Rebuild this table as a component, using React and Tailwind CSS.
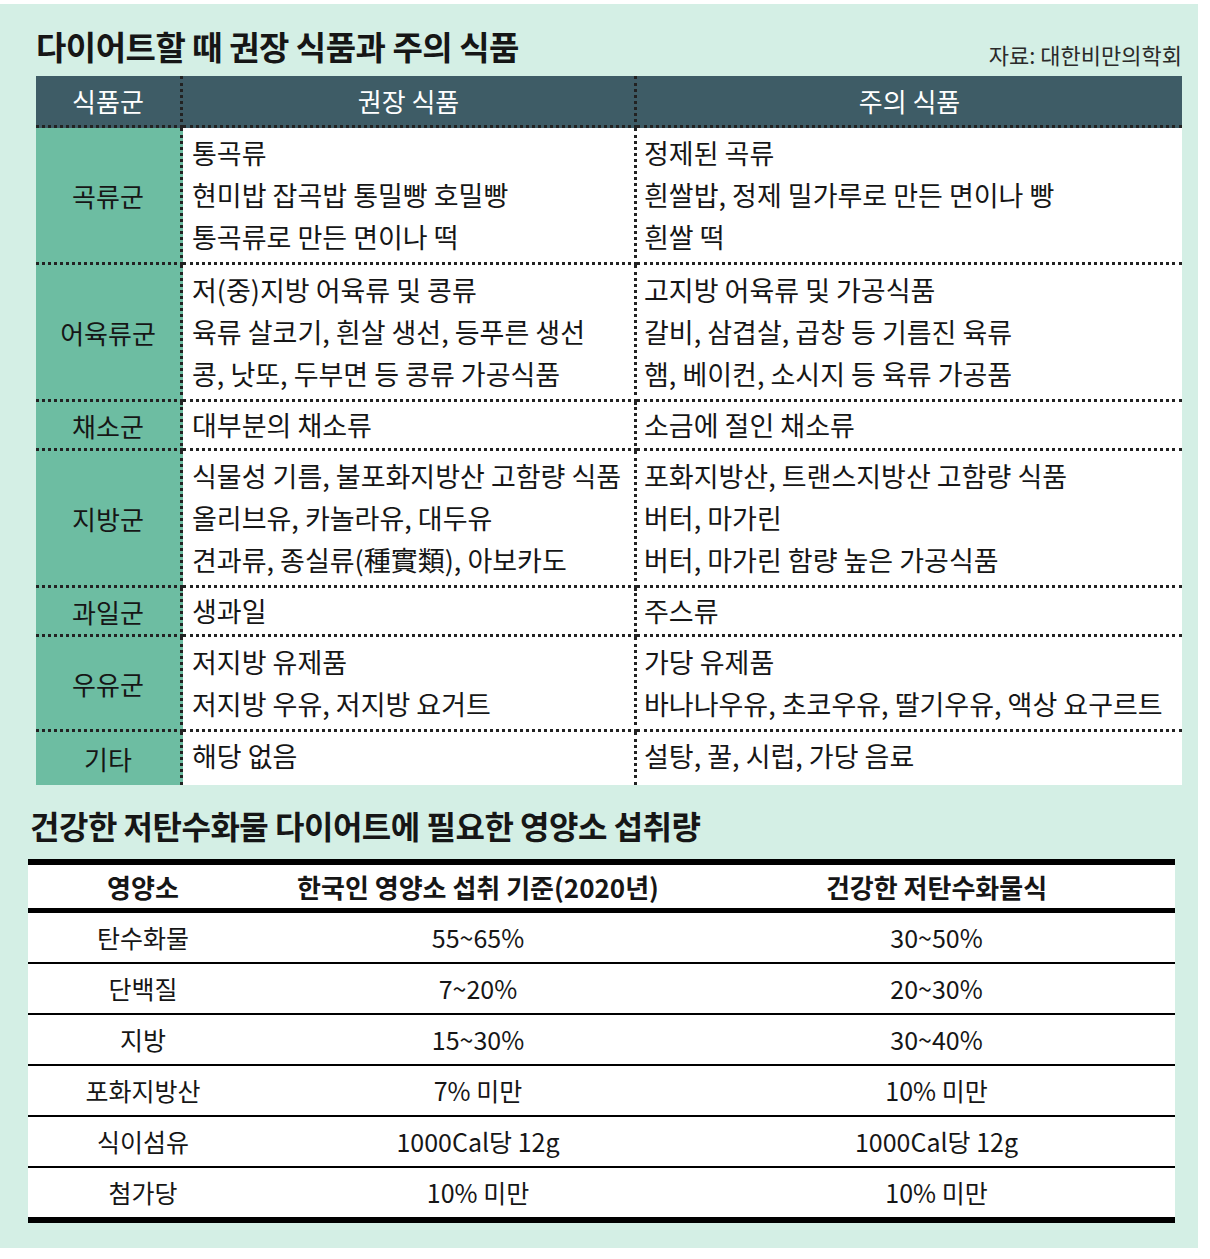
const foods = [
  {
    group: '곡류군',
    good: ['통곡류', '현미밥 잡곡밥 통밀빵 호밀빵', '통곡류로 만든 면이나 떡'],
    bad: ['정제된 곡류', '흰쌀밥, 정제 밀가루로 만든 면이나 빵', '흰쌀 떡'],
  },
  {
    group: '어육류군',
    good: ['저(중)지방 어육류 및 콩류', '육류 살코기, 흰살 생선, 등푸른 생선', '콩, 낫또, 두부면 등 콩류 가공식품'],
    bad: ['고지방 어육류 및 가공식품', '갈비, 삼겹살, 곱창 등 기름진 육류', '햄, 베이컨, 소시지 등 육류 가공품'],
  },
  { group: '채소군', good: ['대부분의 채소류'], bad: ['소금에 절인 채소류'] },
  {
    group: '지방군',
    good: ['식물성 기름, 불포화지방산 고함량 식품', '올리브유, 카놀라유, 대두유', '견과류, 종실류(種實類), 아보카도'],
    bad: ['포화지방산, 트랜스지방산 고함량 식품', '버터, 마가린', '버터, 마가린 함량 높은 가공식품'],
  },
  { group: '과일군', good: ['생과일'], bad: ['주스류'] },
  {
    group: '우유군',
    good: ['저지방 유제품', '저지방 우유, 저지방 요거트'],
    bad: ['가당 유제품', '바나나우유, 초코우유, 딸기우유, 액상 요구르트'],
  },
  { group: '기타', good: ['해당 없음'], bad: ['설탕, 꿀, 시럽, 가당 음료'], tall: true },
];

const nutrients = [
  ['탄수화물', '55~65%', '30~50%'],
  ['단백질', '7~20%', '20~30%'],
  ['지방', '15~30%', '30~40%'],
  ['포화지방산', '7% 미만', '10% 미만'],
  ['식이섬유', '1000Cal당 12g', '1000Cal당 12g'],
  ['첨가당', '10% 미만', '10% 미만'],
];

function Lines({ items, pad }) {
  return (
    <div className={pad}>
      {items.map((t) => (
        <div key={t} className="leading-[42px] whitespace-nowrap">{t}</div>
      ))}
    </div>
  );
}

export default function App() {
  return (
    <div className="w-[1210px] h-[1259px] bg-white font-['Noto_Sans_CJK_KR','Noto_Sans',sans-serif] text-[#161616]">
      <div className="w-[1198px] h-[1244px] mt-[4px] bg-[#d4efe5] pt-[20px]">
        {/* 권장 / 주의 식품 */}
        <div className="ml-[36px] w-[1146px]">
          <div className="flex items-end justify-between">
            <h1 className="text-[33px] font-bold leading-[44px] tracking-[-0.5px]">다이어트할 때 권장 식품과 주의 식품</h1>
            <span className="text-[22px] leading-[28px] text-[#2a2a2a]">자료: 대한비만의학회</span>
          </div>

          <div className="mt-[8px] grid grid-cols-[147px_454px_545px] text-[27px]">
            <div className="h-[52px] bg-[#3e5c66] text-white text-[26px] flex items-center justify-center border-r-[3px] border-b-[3px] border-dotted border-[#222]">식품군</div>
            <div className="h-[52px] bg-[#3e5c66] text-white text-[26px] flex items-center justify-center border-r-[3px] border-b-[3px] border-dotted border-[#222]">권장 식품</div>
            <div className="h-[52px] bg-[#3e5c66] text-white text-[26px] flex items-center justify-center border-b-[3px] border-dotted border-[#222]">주의 식품</div>

            {foods.map((row, i) => {
              const last = i === foods.length - 1;
              const pad = row.tall ? 'pt-[3px] pb-[8px]' : row.good.length === 1 ? 'py-[2px]' : 'py-[4px]';
              const bottom = last ? '' : 'border-b-[3px]';
              return [
                <div key={row.group + 'g'} className={`bg-[#6dbda2] text-[26px] flex items-center justify-center border-r-[3px] border-dotted border-[#222] ${bottom}`}>
                  {row.group}
                </div>,
                <div key={row.group + 'a'} className={`bg-white pl-[9px] border-r-[3px] border-dotted border-[#222] ${bottom}`}>
                  <Lines items={row.good} pad={pad} />
                </div>,
                <div key={row.group + 'b'} className={`bg-white pl-[7px] border-dotted border-[#222] ${bottom}`}>
                  <Lines items={row.bad} pad={pad} />
                </div>,
              ];
            })}
          </div>
        </div>

        {/* 영양소 섭취량 */}
        <div className="ml-[28px] w-[1147px] mt-[18px]">
          <h2 className="ml-[2px] text-[32px] font-bold leading-[44px] tracking-[-0.5px]">건강한 저탄수화물 다이어트에 필요한 영양소 섭취량</h2>

          <div className="mt-[12px] bg-white border-t-[6px] border-black text-[25px]">
            <div className="grid grid-cols-[230px_440px_477px] h-[48px] items-center text-center text-[26px] font-bold border-b-[5px] border-black">
              <div>영양소</div>
              <div>한국인 영양소 섭취 기준(2020년)</div>
              <div>건강한 저탄수화물식</div>
            </div>
            {nutrients.map((n, i) => (
              <div
                key={n[0]}
                className={`grid grid-cols-[230px_440px_477px] items-center text-center border-black ${i === nutrients.length - 1 ? 'border-b-[6px] h-[55px]' : 'border-b-2 h-[51px]'}`}
              >
                <div>{n[0]}</div>
                <div>{n[1]}</div>
                <div>{n[2]}</div>
              </div>
            ))}
          </div>
        </div>
      </div>
    </div>
  );
}
